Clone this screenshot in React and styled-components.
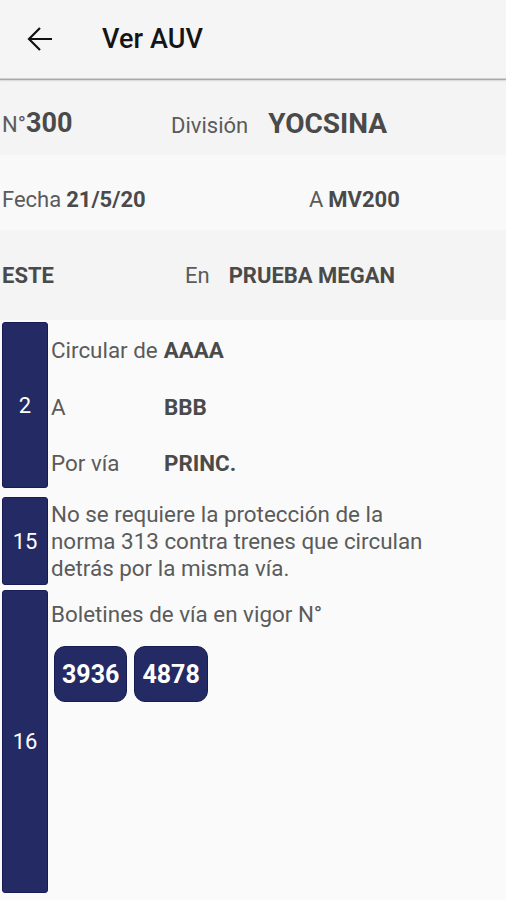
import React from 'react';
import styled, { createGlobalStyle } from 'styled-components';

const GlobalStyle = createGlobalStyle`
  html, body {
    margin: 0;
    padding: 0;
    background: #fafafa;
    font-family: Roboto, "Noto Sans", "Liberation Sans", sans-serif;
  }
`;

const Page = styled.div`
  width: 506px;
  min-height: 900px;
  background: #fafafa;
  color: #555;
`;

const Toolbar = styled.header`
  height: 78px;
  display: flex;
  align-items: center;
  background: #f5f5f5;
  box-shadow: 0 1px 1px rgba(0, 0, 0, 0.25), 0 2px 2px rgba(0, 0, 0, 0.08);
  border-bottom: 1px solid #d0d0d0;
  position: relative;
  z-index: 1;
`;

const BackButton = styled.button`
  width: 26px;
  height: 26px;
  margin-left: 27px;
  padding: 0;
  border: none;
  background: none;
  display: flex;
  align-items: center;
  justify-content: center;
  color: #111;
`;

const Title = styled.h1`
  margin: 0 0 0 49px;
  font-size: 27px;
  font-weight: 500;
  color: #151515;
  letter-spacing: 0.1px;
`;

const InfoRow = styled.div`
  height: ${(p) => p.height}px;
  box-sizing: border-box;
  padding: ${(p) => p.offset || 0}px 0 0 2px;
  display: flex;
  align-items: center;
  background: ${(p) => (p.light ? '#f9f9f9' : '#f4f4f4')};
`;

const Cell = styled.div`
  width: ${(p) => (p.width ? `${p.width}px` : 'auto')};
  display: flex;
  align-items: baseline;
  gap: ${(p) => p.gap || 0}px;
  white-space: nowrap;
`;

const Label = styled.span`
  font-size: ${(p) => p.size || 22}px;
  color: #5b5b5b;
`;

const Value = styled.span`
  font-size: ${(p) => p.size || 22}px;
  font-weight: 700;
  color: #4a4a4a;
`;

const Blocks = styled.div`
  display: flex;
  flex-direction: column;
  padding: 2px 0 7px 2px;
`;

const Block = styled.section`
  display: flex;
  height: ${(p) => p.height}px;
  margin-bottom: ${(p) => p.gap || 0}px;
`;

const NumberBar = styled.div`
  width: 46px;
  flex-shrink: 0;
  box-sizing: border-box;
  background: #242a63;
  border: 1.5px solid #161c54;
  border-radius: 3px;
  display: flex;
  align-items: center;
  justify-content: center;
  color: #fff;
  font-size: 22px;
`;

const BlockBody = styled.div`
  flex: 1;
  padding-left: 3px;
  display: flex;
  flex-direction: column;
`;

const FieldRow = styled.div`
  height: 56.5px;
  flex-shrink: 0;
  display: flex;
  align-items: center;
`;

const FieldLabel = styled.span`
  width: ${(p) => (p.inline ? 'auto' : '113px')};
  margin-right: ${(p) => (p.inline ? 6 : 0)}px;
  font-size: 22.4px;
  color: #5b5b5b;
`;

const FieldValue = styled.span`
  font-size: 22.4px;
  font-weight: 700;
  color: #4a4a4a;
`;

const Paragraph = styled.p`
  margin: ${(p) => p.top || 4}px 0 0;
  max-width: 392px;
  font-size: 22.4px;
  line-height: 27px;
  color: #5b5b5b;
`;

const BadgeList = styled.div`
  display: flex;
  gap: 7px;
  margin-top: 18px;
  padding-left: 3px;
`;

const Badge = styled.div`
  height: 56px;
  padding: 0 7px;
  box-sizing: border-box;
  display: flex;
  align-items: center;
  background: #242a63;
  border: 1.5px solid #161c54;
  border-radius: 11px;
  color: #fff;
  font-size: 25px;
  font-weight: 700;
`;

const ArrowBack = () => (
  <svg width="26" height="26" viewBox="0 0 26 26" fill="none" stroke="currentColor" strokeWidth="2.2">
    <path d="M25 13H2.5M13 2L2 13l11 11" />
  </svg>
);

const routeFields = [
  { label: 'Circular de', value: 'AAAA', inline: true },
  { label: 'A', value: 'BBB' },
  { label: 'Por vía', value: 'PRINC.' },
];

const bulletins = ['3936', '4878'];

const App = () => (
  <Page>
    <GlobalStyle />
    <Toolbar>
      <BackButton aria-label="Volver">
        <ArrowBack />
      </BackButton>
      <Title>Ver AUV</Title>
    </Toolbar>

    <InfoRow height={76} offset={12}>
      <Cell width={169}>
        <Label size={22}>N°</Label>
        <Value size={27}>300</Value>
      </Cell>
      <Cell gap={20}>
        <Label size={22}>División</Label>
        <Value size={28}>YOCSINA</Value>
      </Cell>
    </InfoRow>
    <InfoRow height={75} offset={14} light>
      <Cell width={307} gap={5}>
        <Label>Fecha</Label>
        <Value>21/5/20</Value>
      </Cell>
      <Cell gap={5}>
        <Label>A</Label>
        <Value>MV200</Value>
      </Cell>
    </InfoRow>
    <InfoRow height={90}>
      <Cell width={183}>
        <Value>ESTE</Value>
      </Cell>
      <Cell gap={19}>
        <Label>En</Label>
        <Value>PRUEBA MEGAN</Value>
      </Cell>
    </InfoRow>

    <Blocks>
      <Block height={166} gap={9}>
        <NumberBar>2</NumberBar>
        <BlockBody>
          {routeFields.map((f) => (
            <FieldRow key={f.label}>
              <FieldLabel inline={f.inline}>{f.label}</FieldLabel>
              <FieldValue>{f.value}</FieldValue>
            </FieldRow>
          ))}
        </BlockBody>
      </Block>
      <Block height={88} gap={5}>
        <NumberBar>15</NumberBar>
        <BlockBody>
          <Paragraph>
            No se requiere la protección de la norma 313 contra trenes que circulan detrás por la
            misma vía.
          </Paragraph>
        </BlockBody>
      </Block>
      <Block height={303}>
        <NumberBar>16</NumberBar>
        <BlockBody>
          <Paragraph top={11}>Boletines de vía en vigor N°</Paragraph>
          <BadgeList>
            {bulletins.map((b) => (
              <Badge key={b}>{b}</Badge>
            ))}
          </BadgeList>
        </BlockBody>
      </Block>
    </Blocks>
  </Page>
);

export default App;
